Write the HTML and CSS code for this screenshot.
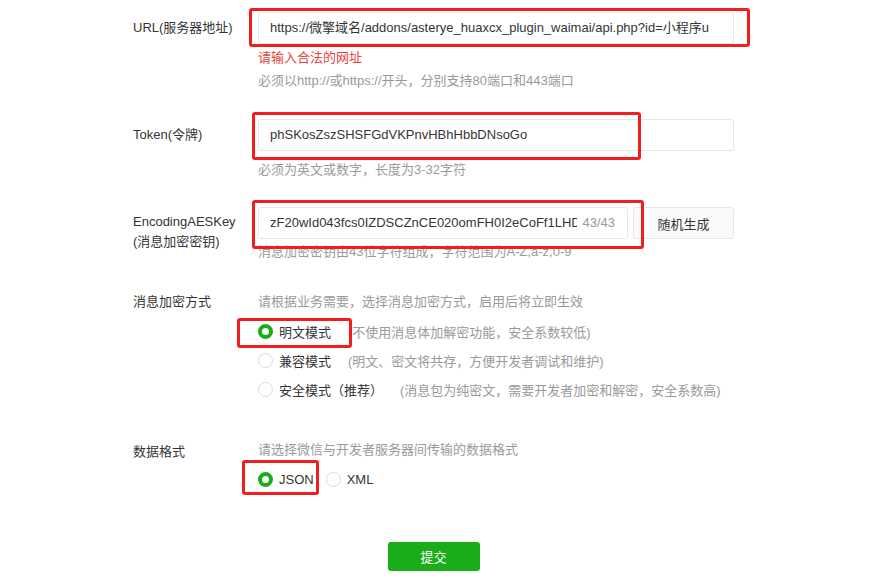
FILE: index.html
```html
<!DOCTYPE html>
<html lang="zh-CN">
<head>
  <meta charset="UTF-8">
  <meta name="viewport" content="width=device-width, initial-scale=1.0">
  <link rel="stylesheet" href="styles.css">
  <title>服务器配置</title>
</head>
<body>
  <div class="page">
    <!-- URL -->
    <div class="row row-url">
      <label class="label">URL(服务器地址)</label>
      <div class="control">
        <div class="input">https://微擎域名/addons/asterye_huaxcx_plugin_waimai/api.php?id=小程序u</div>
        <p class="error">请输入合法的网址</p>
        <p class="tips">必须以http://或https://开头，分别支持80端口和443端口</p>
      </div>
    </div>

    <!-- Token -->
    <div class="row row-token">
      <label class="label">Token(令牌)</label>
      <div class="control">
        <div class="input">phSKosZszSHSFGdVKPnvHBhHbbDNsoGo</div>
        <p class="tips tips-token">必须为英文或数字，长度为3-32字符</p>
      </div>
    </div>

    <!-- EncodingAESKey -->
    <div class="row row-aes">
      <label class="label">EncodingAESKey<br>(消息加密密钥)</label>
      <div class="control">
        <div class="input-group">
          <div class="input input-key"><span class="key">zF20wId043fcs0IZDSCZnCE020omFH0I2eCoFf1LHD</span><span class="count">43/43</span></div>
          <button class="btn-default">随机生成</button>
        </div>
        <p class="tips">消息加密密钥由43位字符组成，字符范围为A-Z,a-z,0-9</p>
      </div>
    </div>

    <!-- 消息加密方式 -->
    <div class="row row-mode">
      <label class="label">消息加密方式</label>
      <div class="control">
        <p class="tips tips-top">请根据业务需要，选择消息加密方式，启用后将立即生效</p>
        <div class="radio-list">
          <div class="radio checked"><span class="dot"></span><span class="radio-text">明文模式</span><span class="radio-desc">(不使用消息体加解密功能，安全系数较低)</span></div>
          <div class="radio"><span class="dot"></span><span class="radio-text">兼容模式</span><span class="radio-desc">(明文、密文将共存，方便开发者调试和维护)</span></div>
          <div class="radio"><span class="dot"></span><span class="radio-text">安全模式（推荐）</span><span class="radio-desc">(消息包为纯密文，需要开发者加密和解密，安全系数高)</span></div>
        </div>
      </div>
    </div>

    <!-- 数据格式 -->
    <div class="row row-format">
      <label class="label">数据格式</label>
      <div class="control">
        <p class="tips tips-top">请选择微信与开发者服务器间传输的数据格式</p>
        <div class="radio-inline">
          <div class="radio checked"><span class="dot"></span><span class="radio-text">JSON</span></div>
          <div class="radio"><span class="dot"></span><span class="radio-text">XML</span></div>
        </div>
      </div>
    </div>

    <div class="actions">
      <button class="btn-primary">提交</button>
    </div>

    <!-- annotation boxes -->
    <div class="mark mark-url"></div>
    <div class="mark mark-token"></div>
    <div class="mark mark-aes"></div>
    <div class="mark mark-mode"></div>
    <div class="mark mark-json"></div>
  </div>
</body>
</html>
```

FILE: styles.css
```css
/* General */
body {
  margin: 0;
  background: #fff;
  font-family: "Liberation Sans", "Noto Sans CJK SC", sans-serif;
  font-size: 13px;
  color: #353535;
}

.page {
  position: relative;
  width: 875px;
  height: 586px;
  padding-top: 12px;
  box-sizing: border-box;
  overflow: hidden;
}

p {
  margin: 0;
}

/* Rows */
.row {
  display: flex;
  padding-left: 133px;
}

.label {
  width: 125px;
  flex-shrink: 0;
  line-height: 20px;
  padding-top: 6px;
  color: #353535;
}

.control {
  width: 476px;
}

.row-token {
  margin-top: 28px;
}

.row-aes {
  margin-top: 27px;
}

.row-aes .label {
  padding-top: 5px;
}

.row-mode {
  margin-top: 30px;
}

.row-format {
  margin-top: 36px;
}

.row-mode .label {
  padding-top: 0;
}

.row-format .label {
  padding-top: 2px;
}

/* Inputs */
.input {
  height: 32px;
  line-height: 30px;
  box-sizing: border-box;
  border: 1px solid #e7e7eb;
  border-radius: 3px;
  padding: 0 11px;
  white-space: nowrap;
  overflow: hidden;
  color: #353535;
}

.input-group {
  display: flex;
  gap: 5px;
}

.input-key {
  width: 370px;
  display: flex;
  padding-right: 12px;
}

.key {
  overflow: hidden;
  flex: 1;
}

.count {
  color: #9a9a9a;
  padding-left: 5px;
}

.btn-default {
  width: 101px;
  height: 32px;
  border: 1px solid #e7e7eb;
  border-radius: 3px;
  background: #fafafa;
  font-family: inherit;
  font-size: 13px;
  color: #353535;
  padding: 0;
}

/* Tips */
.error {
  color: #e64340;
  line-height: 20px;
  margin-top: 4px;
}

.tips {
  color: #9a9a9a;
  line-height: 20px;
  margin-top: 3px;
  white-space: nowrap;
}

.tips-token {
  margin-top: 9px;
}

.tips-top {
  margin-top: 0;
}

/* Radios */
.radio-list {
  margin-top: 5px;
}

.radio {
  display: flex;
  align-items: center;
  height: 29px;
  white-space: nowrap;
}

.dot {
  width: 15px;
  height: 15px;
  box-sizing: border-box;
  border: 1px solid #dcdcdc;
  border-radius: 50%;
  margin-right: 6px;
  flex-shrink: 0;
}

.radio.checked .dot {
  border: 4px solid #1aad19;
}

.radio-text {
  color: #353535;
}

.radio-desc {
  color: #9a9a9a;
  margin-left: 17px;
}

.radio-inline {
  display: flex;
  gap: 12px;
  margin-top: 5px;
}

/* Submit */
.actions {
  display: flex;
  justify-content: center;
  margin-top: 48px;
  padding-right: 8px;
}

.btn-primary {
  width: 92px;
  height: 29px;
  border: none;
  border-radius: 3px;
  background: #1aad19;
  color: #fff;
  font-family: inherit;
  font-size: 13px;
  padding: 0;
}

/* Annotation boxes */
.mark {
  position: absolute;
  border: 3px solid #f21d1d;
  border-radius: 3px;
}

.mark-url {
  left: 249px;
  top: 8px;
  width: 495px;
  height: 33px;
}

.mark-token {
  left: 252px;
  top: 112px;
  width: 383px;
  height: 42px;
}

.mark-aes {
  left: 252px;
  top: 200px;
  width: 386px;
  height: 43px;
}

.mark-mode {
  left: 237px;
  top: 318px;
  width: 109px;
  height: 24px;
}

.mark-json {
  left: 242px;
  top: 460px;
  width: 71px;
  height: 29px;
}
```
